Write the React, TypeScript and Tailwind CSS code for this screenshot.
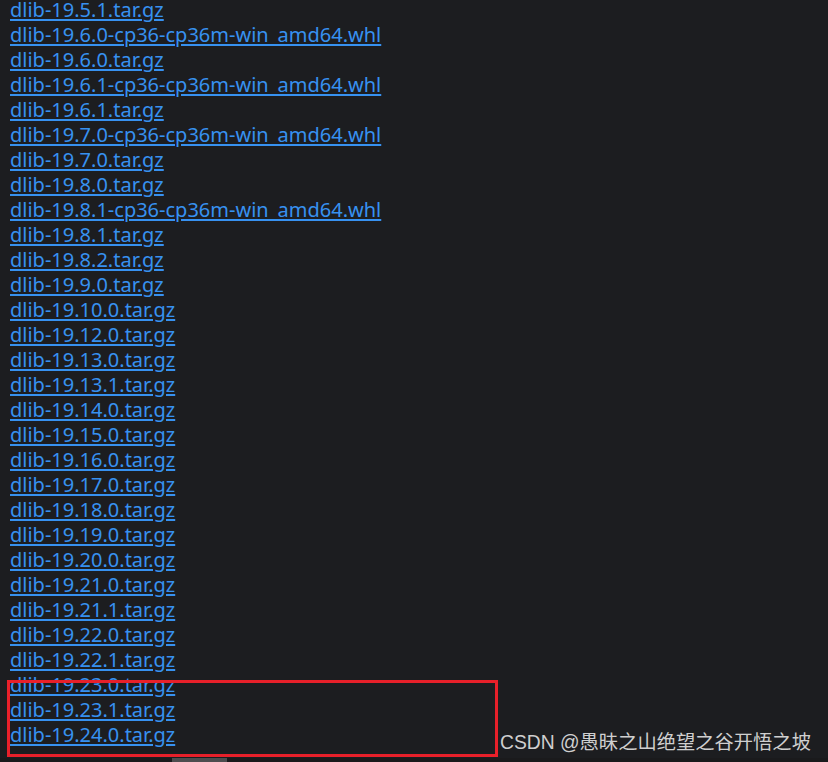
const files = [
  "dlib-19.5.1.tar.gz",
  "dlib-19.6.0-cp36-cp36m-win_amd64.whl",
  "dlib-19.6.0.tar.gz",
  "dlib-19.6.1-cp36-cp36m-win_amd64.whl",
  "dlib-19.6.1.tar.gz",
  "dlib-19.7.0-cp36-cp36m-win_amd64.whl",
  "dlib-19.7.0.tar.gz",
  "dlib-19.8.0.tar.gz",
  "dlib-19.8.1-cp36-cp36m-win_amd64.whl",
  "dlib-19.8.1.tar.gz",
  "dlib-19.8.2.tar.gz",
  "dlib-19.9.0.tar.gz",
  "dlib-19.10.0.tar.gz",
  "dlib-19.12.0.tar.gz",
  "dlib-19.13.0.tar.gz",
  "dlib-19.13.1.tar.gz",
  "dlib-19.14.0.tar.gz",
  "dlib-19.15.0.tar.gz",
  "dlib-19.16.0.tar.gz",
  "dlib-19.17.0.tar.gz",
  "dlib-19.18.0.tar.gz",
  "dlib-19.19.0.tar.gz",
  "dlib-19.20.0.tar.gz",
  "dlib-19.21.0.tar.gz",
  "dlib-19.21.1.tar.gz",
  "dlib-19.22.0.tar.gz",
  "dlib-19.22.1.tar.gz",
  "dlib-19.23.0.tar.gz",
  "dlib-19.23.1.tar.gz",
  "dlib-19.24.0.tar.gz",
]

export default function App() {
  return (
    <div className="relative h-[762px] w-[828px] overflow-hidden bg-[#1c1d20] font-['Noto_Sans',sans-serif]">
      <ul className="flex flex-col pl-[10px]">
        {files.map((name) => (
          <li key={name} className="h-[25px] text-[20px] leading-[20px]">
            <a
              href="#"
              className="text-[#3791f0] underline decoration-[1.5px] underline-offset-[2px]"
            >
              {name}
            </a>
          </li>
        ))}
      </ul>

      {/* highlight box */}
      <div className="absolute left-[7px] top-[680px] h-[77px] w-[491px] border-[3px] border-[#e8202a]" />

      {/* watermark */}
      <div className="absolute left-[500px] top-[731px] text-[19.3px] leading-[24px] text-[#cfcfcf] font-['Liberation_Sans','Noto_Sans_CJK_SC',sans-serif]">
        CSDN @愚昧之山绝望之谷开悟之坡
      </div>

      {/* scrollbar */}
      <div className="absolute bottom-0 left-0 h-[4px] w-full bg-[#1a1a1c]">
        <div className="ml-[172px] h-full w-[55px] bg-[#4d4d4f]" />
      </div>
    </div>
  )
}
